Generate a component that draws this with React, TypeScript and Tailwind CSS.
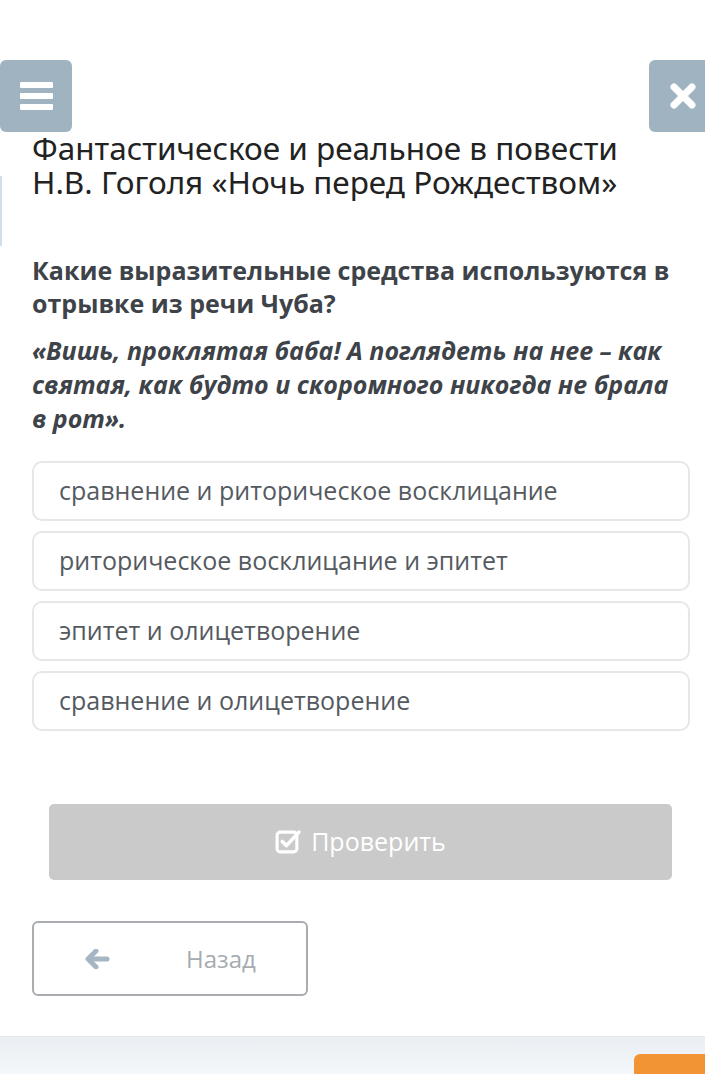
import React from "react";

const options = [
  "сравнение и риторическое восклицание",
  "риторическое восклицание и эпитет",
  "эпитет и олицетворение",
  "сравнение и олицетворение",
];

export default function App() {
  return (
    <div className="relative w-[705px] h-[1074px] overflow-hidden bg-white" style={{ fontFamily: '"Open Sans", "Noto Sans", sans-serif' }}>
      <div className="h-[60px]" />
      <div className="flex justify-between">
        <div className="w-[72px] h-[72px] bg-[#9fb3c1] rounded-[6px] flex flex-col items-center justify-center gap-[5px]">
          <div className="w-[33px] h-[6px] bg-white rounded-[1px]" />
          <div className="w-[33px] h-[6px] bg-white rounded-[1px]" />
          <div className="w-[33px] h-[6px] bg-white rounded-[1px]" />
        </div>
        <div className="w-[72px] h-[72px] bg-[#9fb3c1] rounded-[6px] mr-[-16px] flex items-center pl-[20px]">
          <svg width="28" height="28" viewBox="0 0 28 28">
            <path d="M5 5 L23 23 M23 5 L5 23" stroke="white" strokeWidth="7" strokeLinecap="round" />
          </svg>
        </div>
      </div>
      <div className="absolute left-0 top-[176px] w-[2px] h-[70px] bg-[#cfe0ea]" />
      <div className="pl-[32px] pr-[15px]">
        <h1 className="text-[31.5px] leading-[34px] text-[#222] mt-[-1px]" style={{ fontFamily: '"Noto Sans", "Open Sans", sans-serif' }}>
          Фантастическое и реальное в повести
          <br />
          Н.В. Гоголя «Ночь перед Рождеством»
        </h1>
        <p className="mt-[55px] text-[25px] leading-[33px] font-bold text-[#3e4349] pr-[10px]">
          Какие выразительные средства используются в отрывке из речи Чуба?
        </p>
        <p className="mt-[13px] text-[25px] leading-[34px] font-bold italic text-[#3e4349] pr-[10px]">
          «Вишь, проклятая баба! А поглядеть на нее – как святая, как будто и скоромного никогда не брала в рот».
        </p>
        <div className="mt-[26px] flex flex-col gap-[10px]">
          {options.map((o) => (
            <div key={o} className="h-[60px] border-2 border-[#e5e8ea] rounded-[10px] flex items-center pl-[25px] text-[25px] text-[#555a5f]">
              {o}
            </div>
          ))}
        </div>
        <div className="mt-[73px] ml-[17px] mr-[18px] h-[76px] bg-[#cacaca] rounded-[5px] flex items-center justify-center gap-[10px] text-white text-[25px]">
          <svg width="26" height="26" viewBox="0 0 25 25">
            <rect x="2" y="3" width="19" height="19" rx="3" fill="none" stroke="white" strokeWidth="3" />
            <path d="M7 12 L11 16 L23 3" fill="none" stroke="white" strokeWidth="3.5" strokeLinecap="round" strokeLinejoin="round" />
          </svg>
          <span>Проверить</span>
        </div>
        <div className="mt-[41px] w-[276px] h-[75px] border-2 border-[#a9adb1] rounded-[6px] flex items-center text-[24px] text-[#a6abb0]">
          <svg className="ml-[51px]" width="25" height="20" viewBox="0 0 25 20">
            <path d="M11 2 L3 10 L11 18" fill="none" stroke="#a6b5c4" strokeWidth="5" strokeLinecap="round" strokeLinejoin="round" />
            <path d="M5 10 L22 10" stroke="#a6b5c4" strokeWidth="5" strokeLinecap="round" />
          </svg>
          <span className="ml-[76px]">Назад</span>
        </div>
      </div>
      <div className="absolute left-0 right-0 top-[1036px] bottom-0 border-t border-[#e6e8ea] bg-gradient-to-b from-[#e9eef2] to-[#f4f7fa]" />
      <div className="absolute left-[634px] top-[1054px] w-[90px] h-[40px] bg-[#f39434] rounded-[6px]" />
    </div>
  );
}
